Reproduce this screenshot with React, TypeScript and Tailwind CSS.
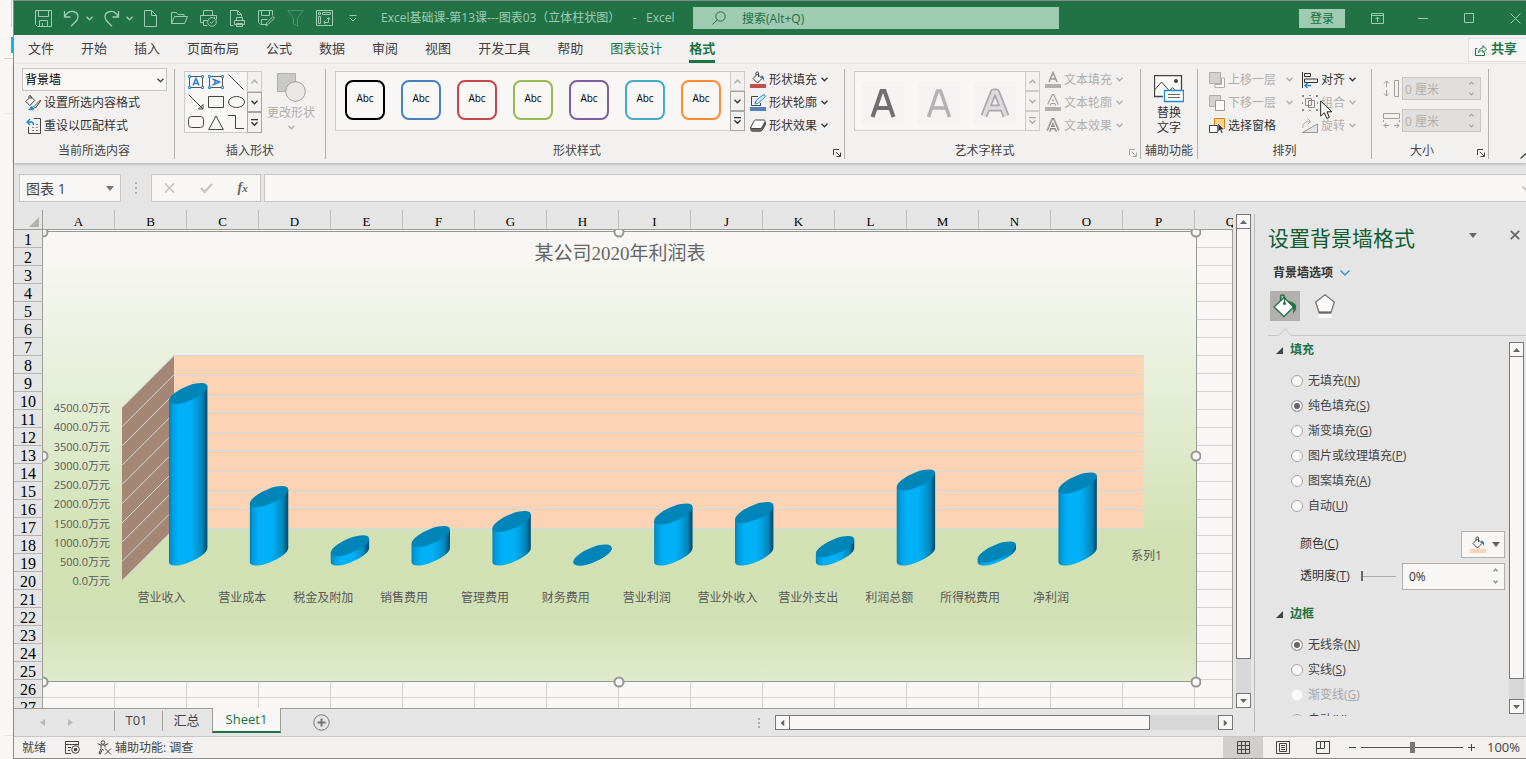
import React from "react";

type Kids = { children?: React.ReactNode };

const UI = "font-['Open_Sans','Noto_Sans_CJK_SC',sans-serif]";

function Svg({ w, h, className = "", children }: Kids & { w: number; h: number; className?: string }) {
  return (
    <svg
      width={w}
      height={h}
      viewBox={`0 0 ${w} ${h}`}
      fill="none"
      stroke="currentColor"
      className={`shrink-0 ${className}`}
      aria-hidden="true"
    >
      {children}
    </svg>
  );
}

const Chevron = ({ className = "" }: { className?: string }) => (
  <Svg w={7} h={5} className={className}>
    <path d="M.5 .8 3.5 3.8 6.5 .8" strokeWidth="1.3" />
  </Svg>
);

const SmallChevron = ({ className = "" }: { className?: string }) => (
  <Svg w={5} h={4} className={className}>
    <path d="M.4 .6 2.5 2.8 4.6 .6" strokeWidth="1.2" />
  </Svg>
);

/* ---------- Title bar ---------- */

function QuickButton({ label, width, children }: Kids & { label: string; width: string }) {
  return (
    <button type="button" aria-label={label} className={`flex h-full items-center justify-center ${width}`}>
      {children}
    </button>
  );
}

function TitleBar() {
  return (
    <header className="flex h-[34px] shrink-0 items-center bg-[#217346] text-[#9fcbb3]">
      <div className="flex h-full items-center pl-3.5">
        <QuickButton label="保存" width="w-[30px]">
          <Svg w={17} h={17}>
            <path d="M.5 .5h16v16H2.5l-2-2zM3.5 .5v6h10v-6M4.5 16.5v-6h8v6M7.5 13v3.5" />
          </Svg>
        </QuickButton>
        <QuickButton label="撤消" width="w-[26px]">
          <Svg w={17} h={17}>
            <path d="M1.5 1v6h6M1.8 6.5C4 2.5 7 1.2 10 1.5c5 .6 6.3 5.5 4 8.5-1.5 2-3.5 4-6 6.3" strokeWidth="1.3" />
          </Svg>
        </QuickButton>
        <QuickButton label="撤消列表" width="w-2.5"><Chevron /></QuickButton>
        <QuickButton label="恢复" width="w-[30px] pl-1">
          <Svg w={17} h={17}>
            <path d="M15.5 1v6h-6M15.2 6.5C13 2.5 10 1.2 7 1.5 2 2.1 .7 7 3 10c1.5 2 3.5 4 6 6.3" strokeWidth="1.3" />
          </Svg>
        </QuickButton>
        <QuickButton label="恢复列表" width="w-2.5"><Chevron /></QuickButton>
        <div className="flex h-full items-center pl-0.5">
          <QuickButton label="新建" width="w-[29px]">
            <Svg w={13} h={17}><path d="M.5 .5h7l5 5v11H.5zM7.5 .5v5h5" /></Svg>
          </QuickButton>
          <QuickButton label="打开" width="w-[29px]">
            <Svg w={17} h={14}><path d="M.5 12.5V1.5h5l1.5 2h6v2M.5 12.5l3-7h13l-3 7z" /></Svg>
          </QuickButton>
          <QuickButton label="打印预览" width="w-[29px]">
            <Svg w={17} h={17}>
              <path d="M3.5 5.5v-5h9v5M3.5 12.5h-3v-7h16v4M3.5 15.5h4M3.5 15.5v-5h4M14 7.5h1" />
              <circle cx="12" cy="12" r="4.3" />
              <path d="m10 12 1.5 1.5 2.5-3" />
            </Svg>
          </QuickButton>
          <QuickButton label="快速打印" width="w-[29px]">
            <Svg w={15} h={17}>
              <path d="M3.5 15.5h-3V.5h7l4 4v2M7.5 .5v4h4M6.5 10.5v-3h6v3M4.5 10.5h10v4h-10zM6.5 13.5h6v3h-6z" />
            </Svg>
          </QuickButton>
          <QuickButton label="另存为" width="w-[29px]">
            <Svg w={17} h={17}>
              <path d="M9 14.5H2.5l-2-2V.5h14v5M3.5 .5v5h8v-5M3.5 14.5v-5h6M8 16l1-3.5 6-6 1.5 1.5-6 6z" />
            </Svg>
          </QuickButton>
          <QuickButton label="筛选" width="w-[29px]">
            <Svg w={17} h={17} className="text-[#4f9470]"><path d="M.8 .5h15.4L10.5 8v8L6.5 14V8z" /></Svg>
          </QuickButton>
          <QuickButton label="数据透视表" width="w-[29px]">
            <Svg w={17} h={17}>
              <path d="M.5 .5h16v15H.5zM2.5 2.5h2v2h-2zM6.5 2.5h8v2h-8zM2.5 6.5h2v7h-2zM12.5 8v4.5H8M10.8 9.300l1.700-1.800 1.700 1.800M9.500 10.800 7.700 12.500l1.800 1.700" />
            </Svg>
          </QuickButton>
          <QuickButton label="自定义快速访问工具栏" width="w-[28px]">
            <Svg w={8} h={7}><path d="M.5 .5h7M1 3l3 3 3-3" /></Svg>
          </QuickButton>
        </div>
      </div>
      <h1 className="h-5 w-[326px] pl-[14px] text-xs leading-5 font-normal whitespace-pre">
        Excel基础课-第13课---图表03（立体柱状图）{"    "}-{"   "}Excel
      </h1>
      <label className="flex h-[22px] w-[366px] items-center gap-4 bg-[#9fcbb3] pl-[19px] text-[#1f6f43]">
        <Svg w={14} h={14}>
          <circle cx="8.5" cy="5.5" r="4.7" />
          <path d="M5.2 8.8.5 13.5" />
        </Svg>
        <span className="sr-only">搜索</span>
        <input className="h-full w-full bg-transparent text-xs outline-none placeholder:text-[#1f6f43]" placeholder="搜索(Alt+Q)" />
      </label>
      <div className="ml-auto flex h-full items-center">
        <button type="button" className="mr-[9px] h-[19px] w-[46px] bg-[#9fcbb3] text-xs leading-[19px] text-[#1a6a3e]">登录</button>
        <QuickButton label="功能区显示选项" width="w-[46px]">
          <Svg w={13} h={11}><path d="M.5 .5h12v10H.5zM.5 2.5h12M6.5 9V4.5M4.5 6.2l2-2 2 2" /></Svg>
        </QuickButton>
        <QuickButton label="最小化" width="w-[46px]"><Svg w={10} h={1}><path d="M0 .5h10" /></Svg></QuickButton>
        <QuickButton label="最大化" width="w-[46px]"><Svg w={10} h={10}><path d="M.5 .5h9v9h-9z" /></Svg></QuickButton>
        <QuickButton label="关闭" width="w-[34px] pl-3"><Svg w={11} h={11}><path d="m.5 .5 10 10M10.5 .5l-10 10" /></Svg></QuickButton>
      </div>
    </header>
  );
}

/* ---------- Ribbon ---------- */

const tabs = ["文件", "开始", "插入", "页面布局", "公式", "数据", "审阅", "视图", "开发工具", "帮助", "图表设计", "格式"];

function TabStrip() {
  return (
    <nav className="flex h-[29px] shrink-0 items-start bg-[#f3f1f0] pl-3.5 text-[13px] text-[#3f3f3f]">
      <div className="flex gap-[27px]">
        {tabs.map((t) => {
          const active = t === "格式";
          const tone = active
            ? "border-b-[3px] border-[#217346] font-bold text-[#217346]"
            : t === "图表设计"
              ? "text-[#217346]"
              : "";
          return (
            <a key={t} href="#" className={`h-7 leading-[26px] whitespace-nowrap ${tone}`}>
              {t}
            </a>
          );
        })}
      </div>
      <button type="button" className="mt-[3px] ml-auto flex h-6 w-[58px] items-center gap-1 border border-r-0 border-[#e1dfdd] bg-[#f8f7f5] pb-0.5 pl-1.5 text-[13px] font-bold text-[#217346]">
        <Svg w={12} h={12} className="mt-0.5">
          <path d="M2.5 4.5h-2v7h9v-3M3.5 8.5c0-3 2-4.500 4.500-4.500V1.5l3.500 3.700L8 8.700V6.500c-2 0-3.500.5-4.500 2z" />
        </Svg>
        共享
      </button>
    </nav>
  );
}

function Group({ label, width, launcher, children }: Kids & { label: string; width: string; launcher?: string }) {
  return (
    <section aria-label={label} className={`flex h-[90px] shrink-0 flex-col border-r border-[#b5b2ac] ${width}`}>
      <div className="flex h-[76px] items-start">{children}</div>
      <div className={`relative text-center text-xs leading-4 ${launcher ? "pr-4" : ""}`}>
        {label}
        {launcher && (
          <button type="button" aria-label={`${label}设置`} className={`absolute right-[3px] bottom-0.5 ${launcher}`}>
            <Svg w={8} h={8}><path d="M.5 6V.5H6M3 3l4 4M7.5 3.5v4h-4" /></Svg>
          </button>
        )}
      </div>
    </section>
  );
}

function Row({ icon, text, chevron, disabled, wide }: { icon: React.ReactNode; text: string; chevron?: boolean; disabled?: boolean; wide?: boolean }) {
  return (
    <button type="button" disabled={disabled} className={`flex h-[23px] items-center text-xs whitespace-nowrap ${disabled ? "text-[#b1afab]" : "text-[#333]"}`}>
      <span className="mr-[3px] flex w-4 justify-center">{icon}</span>
      {text}
      {chevron && <Chevron className={wide ? "ml-2.5" : "ml-1"} />}
    </button>
  );
}

function GalleryScroll({ disabled }: { disabled?: boolean }) {
  const edge = disabled ? "border-[#cfccc8] text-[#aaa]" : "border-[#a8a6a3] text-[#333]";
  return (
    <div className="flex w-[15px] flex-col">
      <button type="button" aria-label="上一行" className="flex flex-1 items-center justify-center border border-[#cfccc8] text-[#aaa]">
        <Chevron className="rotate-180" />
      </button>
      <button type="button" aria-label="下一行" className={`flex flex-1 items-center justify-center border ${edge}`}>
        <Chevron />
      </button>
      <button type="button" aria-label="其他" className={`flex flex-1 items-center justify-center border ${edge}`}>
        <Svg w={7} h={8}><path d="M0 .5h7M.5 3.3l3 3 3-3" strokeWidth="1.3" /></Svg>
      </button>
    </div>
  );
}

function TextBoxGlyph({ turned }: { turned?: boolean }) {
  return (
    <Svg w={16} h={14}>
      <path d="M1.5 1.5h13v11h-13z" stroke="#555" />
      <path d={turned ? "M4.5 4 11.5 7l-7 3M7 5v4" : "M5 10.5 8 3.5l3 7M6 8.5h4"} stroke="#2b7cd3" strokeWidth="1.5" />
      <g fill="#fff" stroke="#1e8bcd">
        <path d="M.5 .5h2v2h-2zM13.5 .5h2v2h-2zM.5 11.5h2v2h-2zM13.5 11.5h2v2h-2z" />
      </g>
    </Svg>
  );
}

function Bucket({ bar }: { bar: string }) {
  return (
    <Svg w={16} h={17}>
      <path d="m3 7.500 4.500-4.500 4.500 4.500-4.500 4.500zM6 4.500V2c0-1.500 2.500-1.500 2.500 0v4" stroke="#444" />
      <path d="M11 4.500c2.500 0 3.500 2 3 6-.5-2-1-3-2.500-3.500z" fill="#1e7bb8" stroke="none" />
      <path d="M0 13h16v4H0z" fill={bar} stroke="none" />
    </Svg>
  );
}

const swatches = [
  "border-black",
  "border-[#4682c0]",
  "border-[#c0474a]",
  "border-[#98b954]",
  "border-[#7d60a0]",
  "border-[#46aac5]",
  "border-[#f68e38]",
];

function SizeField({ id, label, icon }: { id: string; label: string; icon: React.ReactNode }) {
  return (
    <div className="flex items-center gap-0.5 text-[#a19f9d]">
      <label htmlFor={id} className="flex w-[17px] justify-center"><span className="sr-only">{label}</span>{icon}</label>
      <div className="flex h-[23px] w-[79px] items-center border border-[#c8c6c4] bg-[#e1dfdd] pr-1.5">
        <input id={id} disabled defaultValue="0 厘米" className="h-full w-full min-w-0 bg-transparent pl-0.5 text-xs text-[#b1afab]" />
        <div className="flex flex-col gap-[7px]"><SmallChevron className="rotate-180" /><SmallChevron /></div>
      </div>
    </div>
  );
}

function Ribbon() {
  return (
    <div className="relative z-10 flex h-[99px] shrink-0 overflow-hidden bg-[#f3f1f0] pt-[5px] text-[#444] shadow-[0_1px_3px_rgba(0,0,0,0.25)]">
      <Group label="当前所选内容" width="w-[161px]">
        <div className="-mt-px flex w-full flex-col pr-[7px] pl-2">
          <div className="relative">
            <select aria-label="图表元素" className="block h-[23px] w-full appearance-none border border-[#c8c6c4] bg-[#f9f8f7] px-0.5 text-xs text-black">
              <option>背景墙</option>
            </select>
            <Chevron className="pointer-events-none absolute top-2.5 right-[3px]" />
          </div>
          <div className="pl-[3px]">
            <Row text="设置所选内容格式" icon={
              <Svg w={16} h={16}>
                <path d="m.8 6.5 5-5 4 4-5 5zM4 3V1.500c0-1.300 2-1.300 2 0V4" stroke="#444" />
                <path d="M15.5 5 9 11.5l1.500 1.500L15.500 6z" fill="#fff" stroke="#444" />
                <path d="M3 14.5c2 0 2-3 4-3.500l2.500 2.500c-1 2-4 2.500-6.500 1z" fill="#1e8bcd" stroke="none" />
              </Svg>
            } />
            <Row text="重设以匹配样式" icon={
              <Svg w={15} h={16}>
                <path d="M8 .5h6.5v15h-12V9" stroke="#444" />
                <path d="M6 9.5h2M10 6.5h2M6 12.5h2M10 9.5h2M10 12.5h2" stroke="#888" />
                <path d="M4 1 1 4l3 3M1 4h4c2 0 2.500 1.500 2.500 3" stroke="#1e8bcd" strokeWidth="1.4" />
              </Svg>
            } />
          </div>
        </div>
      </Group>

      <Group label="插入形状" width="w-[151px]">
        <div className="mt-0.5 ml-[9px] flex h-[62px]">
          <div className="grid w-[63px] grid-cols-3 place-items-center border border-r-0 border-[#cfccc8] bg-[#f8f7f5] px-px text-[#444]">
            <TextBoxGlyph />
            <TextBoxGlyph turned />
            <Svg w={16} h={16}><path d="m.5 .5 15 15" /></Svg>
            <Svg w={16} h={16}><path d="m.5 .5 14 14M15 10.5V15h-4.5z" /></Svg>
            <Svg w={16} h={12}><path d="M.5 .5h15v11H.5z" /></Svg>
            <Svg w={17} h={12}><ellipse cx="8.5" cy="6" rx="8" ry="5.5" /></Svg>
            <Svg w={16} h={12}><rect x=".5" y=".5" width="15" height="11" rx="3" /></Svg>
            <Svg w={16} h={15}><path d="m8 1 7.3 13.5H.7z" /></Svg>
            <Svg w={16} h={14}><path d="M0 .5h7.5v13H16" /></Svg>
          </div>
          <GalleryScroll />
        </div>
        <button type="button" disabled className="mt-1 ml-[5px] flex flex-col items-center text-xs text-[#b1afab]">
          <Svg w={29} h={29}>
            <path d="M.5 .5h18v18H.5z" fill="#c9cac8" stroke="#b0b0ae" />
            <circle cx="18.5" cy="18.5" r="9.8" fill="#ebe9e8" stroke="#a0a09e" />
          </Svg>
          <span className="mt-[3px] leading-4">更改形状</span>
          <Chevron className="mt-1" />
        </button>
      </Group>

      <Group label="形状样式" width="w-[519px]" launcher="text-[#444]">
        <div className="mt-0.5 ml-[9px] flex h-[60px]">
          <div className="flex w-[395px] gap-3.5 border border-r-0 border-[#cfccc8] bg-[#f8f7f5] pt-2 pl-2">
            {swatches.map((c) => (
              <button key={c} type="button" className={`mx-px h-[40px] w-[40px] shrink-0 rounded-lg border-2 bg-[#f8f7f5] pb-1 text-[10px] text-black ${c}`}>
                Abc
              </button>
            ))}
          </div>
          <GalleryScroll />
        </div>
        <div className="-mt-px ml-[5px]">
          <Row text="形状填充" chevron icon={<Bucket bar="#c0504d" />} />
          <Row text="形状轮廓" chevron icon={
            <Svg w={16} h={17}>
              <path d="M8 2.5H1.5v9h9V9" stroke="#444" />
              <path d="m5 10 1-3.500L13 1c1.500-.8 2.800.8 2 2L8.500 9z" fill="#d8ecf8" stroke="#1e8bcd" />
              <path d="M0 13h16v4H0z" fill="#4f81bd" stroke="none" />
            </Svg>
          } />
          <Row text="形状效果" chevron icon={
            <Svg w={16} h={13}>
              <path d="M5.500 1h8c1.500 0 2 .8 1.500 2l-3 5.500c-.4.8-1 1-1.800 1H2C.8 9.500.5 8.800 1 7.800L4 2c.3-.7.8-1 1.500-1z" fill="#fff" stroke="#444" />
              <path d="M.8 8.500v2c0 1 .5 1.700 1.500 1.700h8c1 0 1.500-.4 2-1.200l3-5V3l-3.500 6c-.4.6-1 .8-1.800.8H2z" fill="#777" stroke="#444" />
            </Svg>
          } />
        </div>
      </Group>

      <Group label="艺术字样式" width="w-[296px]" launcher="text-[#aaa]">
        <div className="mt-0.5 ml-[9px] flex h-[60px]">
          <div className="flex w-[171px] items-center gap-3.5 border border-r-0 border-[#cfccc8] bg-[#f8f7f5] pt-1 pl-[7px]">
            <button type="button" disabled aria-label="样式 1" className="flex h-[42px] w-[42px] items-center justify-center bg-[#f4f3f2]">
              <Svg w={26} h={31}><path d="M2.500 29 11.500 3h3l9 26M6.500 20h13" stroke="#706e70" strokeWidth="4" /></Svg>
            </button>
            <button type="button" disabled aria-label="样式 2" className="flex h-[42px] w-[42px] items-center justify-center bg-[#f4f3f2]">
              <Svg w={26} h={31}><path d="M2.500 29 11.500 3h3l9 26M6.500 20h13" stroke="#b3b1b5" strokeWidth="3.5" /></Svg>
            </button>
            <button type="button" disabled aria-label="样式 3" className="flex h-[42px] w-[42px] items-center justify-center bg-[#f4f3f2]">
              <Svg w={30} h={31}>
                <path d="M4 28 13.500 4h3L26 28M8.500 20h13" stroke="#aaa8ae" strokeWidth="7" strokeLinejoin="round" />
                <path d="M4 28 13.500 4h3L26 28M8.500 20h13" stroke="#dddbdc" strokeWidth="3.5" />
              </Svg>
            </button>
          </div>
          <GalleryScroll disabled />
        </div>
        <div className="-mt-px ml-[5px]">
          <Row disabled text="文本填充" chevron icon={
            <Svg w={16} h={17}><path d="M4 11 8 1.500 12 11M5.500 8h5" strokeWidth="1.5" stroke="#989896" /><path d="M0 13h16v4H0z" fill="#b3b0ab" stroke="none" /></Svg>
          } />
          <Row disabled text="文本轮廓" chevron icon={
            <Svg w={16} h={17}>
              <path d="M4 11 8 2.500 12 11M5.500 8h5" strokeWidth="4" stroke="#989896" />
              <path d="M4 11 8 2.500 12 11M5.500 8h5" strokeWidth="1.8" stroke="#f3f1f0" />
              <path d="M0 13h16v4H0z" fill="#b3b0ab" stroke="none" />
            </Svg>
          } />
          <Row disabled text="文本效果" chevron icon={
            <Svg w={16} h={16}>
              <path d="M3.500 13 8 2.500 12.500 13M5 9.500h6" strokeWidth="5" stroke="#b9b9b7" />
              <path d="M3.500 13 8 2.500 12.500 13M5 9.500h6" strokeWidth="3" stroke="#888" />
              <path d="M3.500 13 8 2.500 12.500 13M5 9.500h6" strokeWidth="1.2" stroke="#f3f1f0" />
            </Svg>
          } />
        </div>
      </Group>

      <Group label="辅助功能" width="w-[57px]">
        <button type="button" className="mt-1.5 flex w-full flex-col items-center text-xs leading-[15px] text-[#333]">
          <Svg w={30} h={28} className="mb-0.5">
            <path d="M9 21.500H.5V.5h27V15" fill="#fbfaf9" stroke="#444" strokeWidth="1.3" />
            <path d="m.5 15 7-8 8 9 3-3.500 2.500 2.500" stroke="#444" />
            <circle cx="22" cy="6" r="2" fill="#444" stroke="none" />
            <path d="M10.500 15.500h19v11h-19z" fill="#fff" stroke="#1e8bcd" strokeWidth="1.3" />
            <path d="M14 19.500h12M14 22.500h12" stroke="#666" />
          </Svg>
          替换<br />文字
        </button>
      </Group>

      <Group label="排列" width="w-[174px]">
        <div className="-mt-px ml-[11px] w-[93px]">
          <Row disabled text="上移一层" chevron wide icon={
            <Svg w={16} h={16}><path d="M6 15.500h9.500V6h-3v6.500H6z" fill="#fbfaf9" /><path d="M.5 .5h11v11H.5z" fill="#d2d1cf" /></Svg>
          } />
          <Row disabled text="下移一层" chevron wide icon={
            <Svg w={16} h={16}><path d="M.5 .5h11v11H.5z" fill="#d2d1cf" /><path d="M6.500 5.500h9v10h-9z" fill="#fbfaf9" stroke="#999" /></Svg>
          } />
          <Row text="选择窗格" icon={
            <Svg w={16} h={16}>
              <path d="M5.500 .5h10v10h-10z" fill="#fbd68a" stroke="#e07b1a" />
              <path d="M.5 7.500h8v7h-8z" fill="#fff" stroke="#444" />
              <path d="M9 5v9l2-2 1.500 3.500 1.500-.7-1.500-3.300H15z" fill="#333" stroke="#fff" strokeWidth=".5" />
            </Svg>
          } />
        </div>
        <div className="-mt-px">
          <Row text="对齐" chevron icon={
            <Svg w={16} h={16}>
              <path d="M.5 0v16M2.500 1.500h6v3h-6zM2.500 7h13v3.500h-13z" stroke="#333" />
              <path d="M9 13.500H3M5.500 11 3 13.500 5.500 16" stroke="#1e8bcd" strokeWidth="1.4" />
            </Svg>
          } />
          <Row disabled text="组合" chevron icon={
            <Svg w={16} h={16}>
              <path d="M3.500 3.500h6v7h-6zM6.500 5.500h6v7h-6z" stroke="#8f8d8b" />
              <path d="M0 0h2v2H0zM14 0h2v2h-2zM0 14h2v2H0zM14 14h2v2h-2zM7 0h2v1H7zM7 15h2v1H7zM0 7h1v2H0zM15 7h1v2h-1z" fill="#8f8d8b" stroke="none" />
            </Svg>
          } />
          <Row disabled text="旋转" chevron icon={
            <Svg w={16} h={15}>
              <path d="M.5 14.500 15.500 6v8.500z" fill="#e4e3e1" stroke="#999" />
              <path d="M1 10C0 6 3 3.500 8.500 3.500M5.500 .5l3 3-3 3" stroke="#aaa" />
            </Svg>
          } />
        </div>
      </Group>

      <Group label="大小" width="w-[117px]" launcher="text-[#444]">
        <div className="mt-2 ml-[11px] flex flex-col gap-[9px]">
          <SizeField id="shape-height" label="高度" icon={
            <Svg w={17} h={17}><path d="M11.500 .5h4v16h-4zM3.500 7V1M1 3.500 3.500 1 6 3.500M3.500 10v6M1 13.500 3.500 16 6 13.500" /></Svg>
          } />
          <SizeField id="shape-width" label="宽度" icon={
            <Svg w={17} h={17}><path d="M.5 1.500h16v5H.5zM1 13.500h5M3.500 11 1 13.500 3.500 16M11 13.500h5M13.500 11l2.500 2.500-2.500 2.500M.5 8v2M16.500 8v2" /></Svg>
          } />
        </div>
      </Group>

      <button type="button" aria-label="折叠功能区" className="mb-1 ml-auto self-end overflow-hidden">
        <Svg w={6} h={6}><path d="M.5 5.500 6 .5" strokeWidth="1.300" /></Svg>
      </button>
    </div>
  );
}

/* ---------- Formula bar ---------- */

const DownTriangle = ({ className = "" }: { className?: string }) => (
  <Svg w={8} h={5} className={className}><path d="M0 0h8L4 5z" fill="currentColor" stroke="none" /></Svg>
);

function FormulaBar() {
  return (
    <div className="flex h-[47px] shrink-0 items-start bg-[#e5e5e5] pt-[11px] pl-[5px]">
      <label className="flex h-7 w-[102px] items-center border border-[#c6c6c6] bg-[#f8f7f5] px-1.5 text-[#777]">
        <span className="sr-only">名称框</span>
        <input className="h-full w-full min-w-0 bg-transparent text-sm text-[#444]" defaultValue="图表 1" />
        <DownTriangle />
      </label>
      <Svg w={2} h={12} className="mx-[14px] mt-2 text-[#aaa]">
        <path d="M1 0v2M1 5v2M1 10v2" strokeWidth="2" />
      </Svg>
      <div className="flex h-7 w-[110px] items-center justify-around border border-[#c6c6c6] bg-[#f8f7f5]">
        <button type="button" aria-label="取消" className="text-[#c4c4c4]"><Svg w={11} h={10}><path d="m1 .5 9 9M10 .5l-9 9" strokeWidth="1.6" /></Svg></button>
        <button type="button" aria-label="输入" className="text-[#c4c4c4]"><Svg w={13} h={10}><path d="m1 5 3.500 4L12 1" strokeWidth="2.2" /></Svg></button>
        <button type="button" aria-label="插入函数" className="font-['Liberation_Serif',serif] text-sm leading-5 font-bold text-[#666] italic">
          f<span className="text-[11px]">x</span>
        </button>
      </div>
      <label className="ml-[3px] flex h-7 flex-1 items-center border border-r-0 border-[#c6c6c6] bg-[#f8f7f5]">
        <span className="sr-only">编辑栏</span>
        <input className="h-full w-full bg-transparent px-2 text-sm" />
        <Svg w={4} h={5} className="text-[#b5b5b5]"><path d="m.5 .5 4 4" strokeWidth="1.5" /></Svg>
      </label>
    </div>
  );
}

/* ---------- Chart ---------- */

const axis = ["4500.0万元", "4000.0万元", "3500.0万元", "3000.0万元", "2500.0万元", "2000.0万元", "1500.0万元", "1000.0万元", "500.0万元", "0.0万元"];

const series = [
  { name: "营业收入", h: 161.5 },
  { name: "营业成本", h: 58.5 },
  { name: "税金及附加", h: 9.2 },
  { name: "销售费用", h: 18.5 },
  { name: "管理费用", h: 33.5 },
  { name: "财务费用", h: 0 },
  { name: "营业利润", h: 41 },
  { name: "营业外收入", h: 42.5 },
  { name: "营业外支出", h: 8.5 },
  { name: "利润总额", h: 75 },
  { name: "所得税费用", h: 3 },
  { name: "净利润", h: 72 },
];

const STEP = 19.25;
const handles = [[619, 232], [1196, 232], [43, 232], [43, 456], [1196, 456], [43, 682], [619, 682], [1196, 682]];

function Chart() {
  return (
    <svg width="1158" height="460" viewBox="43 230 1158 460" role="img" aria-label="某公司2020年利润表">
      <defs>
        <linearGradient id="area" x1="0" y1="0" x2="0" y2="1">
          <stop offset="0" stopColor="#f8f7f5" />
          <stop offset=".06" stopColor="#f7f6f3" />
          <stop offset=".25" stopColor="#ebf2e1" />
          <stop offset=".48" stopColor="#deeaca" />
          <stop offset=".68" stopColor="#d1e1b4" />
          <stop offset=".86" stopColor="#d2e1b5" />
          <stop offset="1" stopColor="#e0eacc" />
        </linearGradient>
        <linearGradient id="body" x1="0" y1="0" x2="1" y2="0">
          <stop offset="0" stopColor="#0080b5" />
          <stop offset=".08" stopColor="#009bdf" />
          <stop offset=".25" stopColor="#00b1f8" />
          <stop offset=".55" stopColor="#00b1f8" />
          <stop offset=".72" stopColor="#009edc" />
          <stop offset=".88" stopColor="#0082b6" />
          <stop offset=".94" stopColor="#005f87" />
          <stop offset="1" stopColor="#004f72" />
        </linearGradient>
      </defs>
      <rect x="40" y="231.5" width="1156.5" height="450" fill="url(#area)" stroke="#979797" />
      <text x="620" y="260" textAnchor="middle" fill="#666" className="font-['Liberation_Serif','Noto_Sans_CJK_SC',serif] text-[19px]">
        某公司2020年利润表
      </text>
      <path d="M174 355h970v174H174z" fill="#fcd3b4" />
      <path d="m122 407.5 52-52V529l-52 51.5z" fill="#a38674" />
      <g stroke="#d6d9dc">
        {axis.map((label, i) => (
          <path key={label} d={`M122 ${407.5 + i * STEP}l52-52`} fill="none" />
        ))}
        {axis.map((label, i) => (
          <path key={label} d={`M174 ${Math.round(355 + i * STEP) + 0.5}H1144`} fill="none" />
        ))}
      </g>
      <g fill="#595959" className="font-['Open_Sans','Noto_Sans_CJK_SC',sans-serif] text-[11px]">
        {axis.map((label, i) => (
          <text key={label} x="110" y={412 + i * STEP} textAnchor="end">{label}</text>
        ))}
      </g>
      {series.map(({ name, h }, i) => (
        <g key={name} transform={`translate(${188.2 + i * 80.86} ${555 - h}) skewY(-20)`}>
          <path d={`M-19.2 0V${h}A19.2 7.8 0 0 0 19.2 ${h}V0z`} fill="url(#body)" />
          <ellipse rx="19.2" ry="7.8" fill="#0085b9" />
        </g>
      ))}
      <g fill="#595959" className="font-['Open_Sans','Noto_Sans_CJK_SC',sans-serif] text-[12px]">
        {series.map(({ name }, i) => (
          <text key={name} x={161.5 + i * 80.86} y="602" textAnchor="middle">{name}</text>
        ))}
        <text x="1131" y="560">系列1</text>
      </g>
      {handles.map(([x, y]) => (
        <circle key={`${x}-${y}`} cx={x} cy={y} r="4.5" fill="#f8f7f5" stroke="#979797" strokeWidth="2" />
      ))}
    </svg>
  );
}

/* ---------- Sheet ---------- */

const columns = "ABCDEFGHIJKLMNOPQ".split("");
const rows = Array.from({ length: 27 }, (_, i) => i + 1);

function ScrollArrow({ dir, label }: { dir: "up" | "down" | "left" | "right"; label: string }) {
  const turn = { up: "rotate-180", down: "", left: "rotate-90", right: "-rotate-90" }[dir];
  return (
    <button type="button" aria-label={label} className="flex size-[15px] shrink-0 items-center justify-center border border-[#777] bg-[#f8f7f5] text-[#666]">
      <Svg w={7} h={4} className={turn}><path d="M0 0h7L3.500 4z" fill="currentColor" stroke="none" /></Svg>
    </button>
  );
}

function Sheet() {
  return (
    <div className="flex min-h-0 flex-1">
      <div className="relative min-w-0 flex-1 overflow-hidden">
        <table className="w-[1253px] table-fixed border-separate border-spacing-0 font-['Liberation_Serif',serif] text-black">
          <colgroup>
            <col className="w-[29px]" />
            {columns.map((c) => <col key={c} className="w-[72px]" />)}
          </colgroup>
          <thead>
            <tr className="h-5 bg-[#e5e5e5]">
              <th className="border-r border-b border-[#9b9e92] p-0">
                <Svg w={10} h={10} className="mt-1 mr-[3px] ml-auto"><path d="M10 0v10H0z" fill="#b1b1b1" stroke="none" /></Svg>
              </th>
              {columns.map((c) => (
                <th key={c} scope="col" className="border-r border-b border-r-[#bdbdbd] border-b-[#9b9e92] p-0 pt-[5px] text-[13px] leading-[14px] font-normal">
                  {c}
                </th>
              ))}
            </tr>
          </thead>
          <tbody>
            {rows.map((r) => (
              <tr key={r} className="h-[18px]">
                <th scope="row" className="border-r border-b border-[#9b9e92] border-b-[#b5b5b5] bg-[#e5e5e5] p-0 pt-0.5 text-base leading-[15px] font-normal">
                  {r}
                </th>
                {columns.map((c) => <td key={c} className="border-r border-b border-[#d4d4d4] bg-[#f8f7f5] p-0" />)}
              </tr>
            ))}
          </tbody>
        </table>
        <div className="absolute top-5 right-0 bottom-0 left-[29px] overflow-hidden border-r border-[#9b9e92]">
          <Chart />
        </div>
      </div>
      <div className="flex w-[21px] shrink-0 flex-col items-center bg-[#e5e5e5] pt-1">
        <ScrollArrow dir="up" label="向上滚动" />
        <div className="-mt-px w-[15px] flex-[432] border border-[#777] bg-[#f8f7f5]" />
        <div className="w-[15px] flex-[34] bg-[#d8d7d7]" />
        <ScrollArrow dir="down" label="向下滚动" />
      </div>
    </div>
  );
}

function SheetTabs() {
  return (
    <div className="flex h-7 shrink-0 bg-[#e5e5e5] text-[13px] text-[#444]">
      <div className="flex w-[100px] items-center gap-[23px] border-t border-[#9b9e92] pl-[26px] text-[#b9b9b9]">
        <Svg w={5} h={7}><path d="M5 0v7L0 3.500z" fill="currentColor" stroke="none" /></Svg>
        <Svg w={5} h={7}><path d="M0 0v7l5-3.500z" fill="currentColor" stroke="none" /></Svg>
      </div>
      <div className="flex w-[49px] border-t border-[#9b9e92] pt-0.5">
        <button type="button" className="h-5 flex-1 border-x border-[#9b9e92] pr-1">T01</button>
      </div>
      <button type="button" className="w-[49px] border-t border-[#9b9e92] pr-0.5 pb-1">汇总</button>
      <button type="button" className="h-[25px] w-[69px] border-x border-b-2 border-x-[#9b9e92] border-b-[#217346] bg-[#f8f7f5] text-[#217346]">Sheet1</button>
      <div className="flex flex-1 items-center border-t border-[#9b9e92] pl-8">
        <button type="button" aria-label="新工作表" className="text-[#777]">
          <Svg w={17} h={17}><circle cx="8.5" cy="8.5" r="7.7" /><path d="M8.500 4.500v8M4.500 8.500h8" strokeWidth="2" /></Svg>
        </button>
        <Svg w={2} h={10} className="mr-[15px] ml-auto text-[#aaa]"><path d="M1 0v2M1 4v2M1 8v2" strokeWidth="2" /></Svg>
        <div className="flex w-[458px]">
          <ScrollArrow dir="left" label="向左滚动" />
          <div className="-ml-px flex-[360] border border-[#777] bg-[#f8f7f5]" />
          <div className="flex-[68] bg-[#d8d7d7]" />
          <ScrollArrow dir="right" label="向右滚动" />
        </div>
      </div>
      <div className="w-[21px]" />
    </div>
  );
}

/* ---------- Format panel ---------- */

function Radio({ group, label, hot, checked, disabled }: { group: string; label: string; hot: string; checked?: boolean; disabled?: boolean }) {
  return (
    <label className={`flex h-[25px] items-center gap-[5px] text-xs ${disabled ? "text-[#a6a6a6]" : "text-[#444]"}`}>
      <input
        type="radio"
        name={group}
        defaultChecked={checked}
        disabled={disabled}
        className="size-3 appearance-none rounded-full border border-[#a5a5a5] bg-[#fbfaf9] checked:bg-[#666] checked:shadow-[inset_0_0_0_2px_#fbfaf9] disabled:border-[#efefef]"
      />
      <span>{label}(<u>{hot}</u>)</span>
    </label>
  );
}

function SectionTitle({ children }: Kids) {
  return (
    <button type="button" className="flex h-5 items-center gap-[7px] text-xs font-bold text-[#217346]">
      <Svg w={7} h={7} className="text-[#444]"><path d="M7 0v7H0z" fill="currentColor" stroke="none" /></Svg>
      {children}
    </button>
  );
}

function FormatPanel() {
  return (
    <aside className="my-1 flex w-[272px] shrink-0 flex-col border-l border-[#b9b9b9] text-[#333]">
      <div className="flex h-[46px] items-center pt-1 pr-1.5 pl-[13px]">
        <h2 className="flex-1 text-[21px] text-[#0f5c30]">设置背景墙格式</h2>
        <button type="button" aria-label="任务窗格选项" className="mr-[33px] mb-2 text-[#666]"><DownTriangle /></button>
        <button type="button" aria-label="关闭窗格" className="mb-2 text-[#666]">
          <Svg w={10} h={10}><path d="m.8 .8 8.400 8.400M9.200 .8.8 9.200" strokeWidth="1.8" /></Svg>
        </button>
      </div>
      <button type="button" className="flex h-6 items-center gap-[7px] pt-px pl-[18px] text-xs font-bold">
        背景墙选项
        <Svg w={10} h={6}><path d="m.5 .5 4.500 4.500L9.500 .5" stroke="#2b94cf" strokeWidth="1.4" /></Svg>
      </button>
      <div className="mt-[7px] flex gap-2.5 pl-[15px]">
        <button type="button" aria-label="填充与线条" className="flex size-[30px] items-center justify-center bg-[#b1b0af]">
          <Svg w={24} h={24}>
            <path d="M1 13 11 3.500 20.500 13 11 22.500z" fill="#fff" stroke="#217346" strokeWidth="1.3" />
            <path d="M7.500 7V2.500c0-2 4-2 4 0V9" stroke="#217346" strokeWidth="1.3" />
            <circle cx="11.5" cy="9.5" r="1.5" fill="#217346" stroke="none" />
            <path d="M15 7c6 .5 9 4 8 7-.3 2-1 3.500-3 6 .5-4 .3-7-1.500-9z" fill="#217346" stroke="none" />
          </Svg>
        </button>
        <button type="button" aria-label="效果" className="flex size-[30px] items-center justify-center">
          <Svg w={20} h={24}>
            <path d="M10 .8 19.300 8 16 18.500H4L.7 8z" fill="#fbfaf9" stroke="#777" strokeWidth="1.3" />
            <path d="M4 18.500h12" stroke="#666" strokeWidth="2" />
            <path d="M4 20h12l1 4H3z" fill="#f8f8f8" stroke="none" />
          </Svg>
        </button>
      </div>
      <div className="flex h-[15px] items-end pl-[13px]">
        <div className="w-[11px] border-b border-[#c3c8c6]" />
        <Svg w={12} h={8} className="text-[#c3c8c6]"><path d="M0 7.500 6 .5l6 7" /></Svg>
        <div className="flex-1 border-b border-[#c3c8c6]" />
      </div>
      <div className="flex min-h-0 flex-1 pt-1.5">
        <div className="mb-4 flex-1 overflow-hidden pl-[21px]">
          <div className="-mt-1 pt-0.5"><SectionTitle>填充</SectionTitle></div>
          <div className="mt-2 pl-[15px]">
            <Radio group="fill" label="无填充" hot="N" />
            <Radio group="fill" label="纯色填充" hot="S" checked />
            <Radio group="fill" label="渐变填充" hot="G" />
            <Radio group="fill" label="图片或纹理填充" hot="P" />
            <Radio group="fill" label="图案填充" hot="A" />
            <Radio group="fill" label="自动" hot="U" />
          </div>
          <div className="mt-3 flex h-7 items-center justify-between pr-1 pl-6 text-xs">
            <span>颜色(<u>C</u>)</span>
            <button type="button" aria-label="填充颜色" className="flex h-[27px] w-11 items-center gap-1.5 border border-[#b0b0b0] bg-[#f8f7f5] pl-2 text-[#666]">
              <Bucket bar="#fcd3b4" />
              <DownTriangle />
            </button>
          </div>
          <div className="mt-1 flex h-7 items-center pr-1 pl-6 text-xs">
            <label htmlFor="alpha">透明度(<u>T</u>)</label>
            <input
              id="alpha"
              type="range"
              defaultValue={0}
              className="mr-1.5 ml-auto h-3 w-[35px] appearance-none bg-[linear-gradient(#aaa,#aaa)] bg-[length:100%_1px] bg-center bg-no-repeat [&::-webkit-slider-thumb]:h-2.5 [&::-webkit-slider-thumb]:w-0.5 [&::-webkit-slider-thumb]:appearance-none [&::-webkit-slider-thumb]:bg-[#666]"
            />
            <div className="flex h-[27px] w-[103px] items-center border border-[#b0b0b0] bg-[#f8f7f5] pr-1.5 text-[#777]">
              <input aria-label="透明度百分比" defaultValue="0%" className="h-full w-full min-w-0 bg-transparent pl-1.5 text-xs text-[#333]" />
              <div className="flex flex-col gap-2"><SmallChevron className="rotate-180" /><SmallChevron /></div>
            </div>
          </div>
          <div className="mt-3.5"><SectionTitle>边框</SectionTitle></div>
          <div className="mt-2 pl-[15px]">
            <Radio group="line" label="无线条" hot="N" checked />
            <Radio group="line" label="实线" hot="S" />
            <Radio group="line" label="渐变线" hot="G" disabled />
            <Radio group="line" label="自动" hot="U" />
          </div>
        </div>
        <div className="mr-0.5 mb-[18px] flex w-[15px] flex-col">
          <ScrollArrow dir="up" label="面板向上滚动" />
          <div className="-mt-px flex-[323] border border-[#777] bg-[#f8f7f5]" />
          <div className="flex-[20] bg-[#d8d7d7]" />
          <ScrollArrow dir="down" label="面板向下滚动" />
        </div>
      </div>
    </aside>
  );
}

/* ---------- Status bar ---------- */

function StatusBar() {
  return (
    <footer className="flex h-[22px] shrink-0 items-center border-t border-[#c6c6c4] bg-[#f3f1f0] pl-2 text-xs text-[#444]">
      <span>就绪</span>
      <Svg w={15} h={13} className="ml-[19px]">
        <path d="M6 12.500H.5V.5h13v4M.5 3.500h13M3 6.500h3M3 9.500h2" />
        <circle cx="10.5" cy="8.5" r="3.8" />
        <circle cx="10.5" cy="8.5" r="1.8" fill="currentColor" stroke="none" />
      </Svg>
      <Svg w={15} h={15} className="mr-[3px] ml-[17px]">
        <circle cx="6" cy="2.5" r="1.8" />
        <path d="M.7 3.500c3 2 7.600 2 10.600 0M4 5v3.500L2 13.500M8 5v2.500M2 13.500l1.300.5 2.200-5 1 1.500M8 8.500l6 6M14 8.500l-6 6" />
      </Svg>
      <span>辅助功能: 调查</span>
      <div className="ml-auto flex h-full items-center">
        <button type="button" aria-label="普通" className="flex h-full w-10 items-center justify-center bg-[#d0cfcc]">
          <Svg w={13} h={13}><path d="M.5 .5h12v12H.5zM4.500 .5v12M8.500 .5v12M.5 4.500h12M.5 8.500h12" /></Svg>
        </button>
        <button type="button" aria-label="页面布局" className="flex h-full w-10 items-center justify-center">
          <Svg w={14} h={13}><path d="M.5 .5h13v12H.5zM3.500 2.500h7v8h-7zM5 4.500h4M5 6.500h4M5 8.500h4" /></Svg>
        </button>
        <button type="button" aria-label="分页预览" className="flex h-full w-10 items-center justify-center">
          <Svg w={14} h={13}><path d="M.5 .5h13v12H.5zM4.500 .5v6.500M8.500 .5V7M.5 7.500h8" /></Svg>
        </button>
        <button type="button" aria-label="缩小" className="ml-1.5"><Svg w={7} h={7}><path d="M0 3.500h7" /></Svg></button>
        <input
          type="range"
          aria-label="缩放"
          defaultValue={50}
          className="mx-[5px] h-3 w-[102px] appearance-none bg-[linear-gradient(#555,#555)] bg-[length:100%_1px] bg-center bg-no-repeat [&::-webkit-slider-thumb]:h-[11px] [&::-webkit-slider-thumb]:w-[5px] [&::-webkit-slider-thumb]:appearance-none [&::-webkit-slider-thumb]:bg-[#777]"
        />
        <button type="button" aria-label="放大"><Svg w={7} h={7}><path d="M0 3.500h7M3.500 0v7" /></Svg></button>
        <span className="w-[51px] pr-1.5 text-right text-[13px]">100%</span>
      </div>
    </footer>
  );
}

export default function App() {
  return (
    <div className={`relative flex h-screen overflow-hidden bg-[#f8f7f5] ${UI}`}>
      <div className="relative w-[13px] shrink-0">
        <div className="absolute top-0 right-0 h-[27px] w-0.5 border-l border-[#d0d0d0]" />
        <div className="absolute top-[37px] right-0 h-4 w-0.5 bg-[#14b4ea]" />
        <div className="absolute top-[58px] right-0 w-[9px] border-t border-[#cfd4d2]" />
        <div className="absolute top-[113px] right-0 w-[9px] border-t border-[#ebebe8]" />
        <div className="absolute top-[735px] right-0 w-[9px] border-t border-[#e3e3e0]" />
      </div>
      <div className="flex min-w-0 flex-1 flex-col border-t border-b border-l border-[#8a8a8a]">
        <TitleBar />
        <TabStrip />
        <Ribbon />
        <FormulaBar />
        <main className="flex min-h-0 flex-1 bg-[#e5e5e5]">
          <div className="flex min-w-0 flex-1 flex-col">
            <Sheet />
            <SheetTabs />
          </div>
          <FormatPanel />
        </main>
        <StatusBar />
      </div>
      <svg width="14" height="20" viewBox="0 0 14 20" className="pointer-events-none absolute top-[100px] left-[1320px] z-20" aria-hidden="true">
        <path d="M.7 1v15l3.600-3.300L6.800 18.500l2.500-1.200L7 11.800h4.800z" fill="#fff" stroke="#222" />
      </svg>
    </div>
  );
}
